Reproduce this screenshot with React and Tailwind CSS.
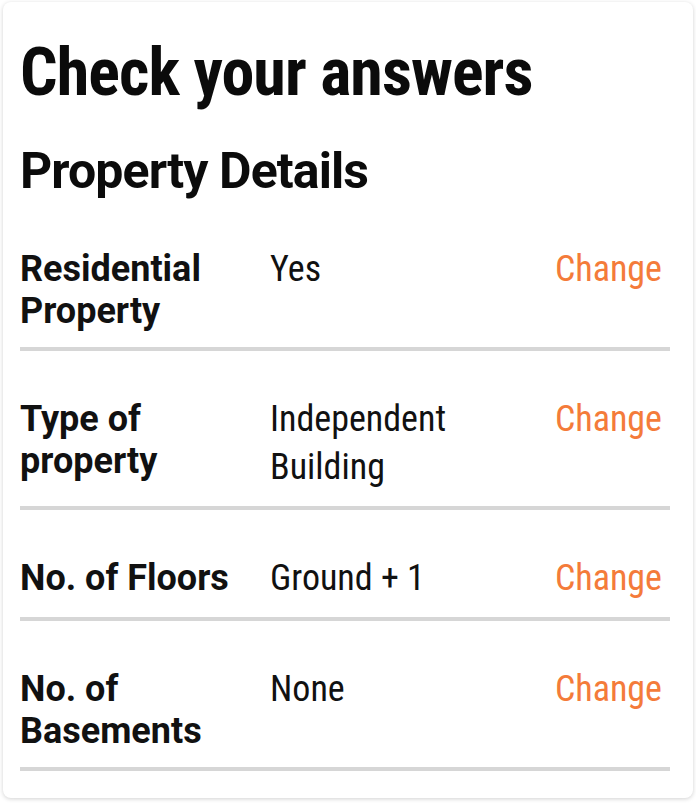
import React from "react";

const rows = [
  { label: ["Residential", "Property"], value: ["Yes"] },
  { label: ["Type of", "property"], value: ["Independent", "Building"] },
  { label: ["No. of Floors"], value: ["Ground + 1"] },
  { label: ["No. of", "Basements"], value: ["None"] },
];

function AnswerRow({ label, value }) {
  return (
    <div className="grid grid-cols-[250px_1fr_auto] items-baseline pt-11 pb-[15px] border-b-4 border-[#d6d6d6]">
      <div className="text-[36px] leading-[42px] font-bold text-[#111] [font-stretch:100%]">
        {label.map((l) => (
          <div key={l}>{l}</div>
        ))}
      </div>
      <div className="text-[36px] leading-[48px] text-[#111]">
        {value.map((v) => (
          <div key={v}>{v}</div>
        ))}
      </div>
      <a href="#" className="text-[36px] leading-[48px] text-[#f47b3a] pr-2">
        Change
      </a>
    </div>
  );
}

export default function App() {
  return (
    <div
      className="pt-[2px] px-[3px] pb-[6px] bg-white [font-stretch:87%]"
      style={{ fontFamily: "Roboto, 'Noto Sans', sans-serif" }}
    >
      <div className="rounded-lg bg-white shadow-[0_1px_4px_rgba(0,0,0,0.18)] pl-[17px] pr-[23px] pt-[31px] pb-[27px]">
        <h1 className="text-[66px] leading-[79px] font-bold text-[#0b0b0b] tracking-[-0.9px]">
          Check your answers
        </h1>
        <h2 className="mt-[29px] text-[50px] leading-[60px] font-bold text-[#0b0b0b] [font-stretch:100%] tracking-[-0.9px]">
          Property Details
        </h2>
        {rows.map((r) => (
          <AnswerRow key={r.label.join(" ")} {...r} />
        ))}
      </div>
    </div>
  );
}
